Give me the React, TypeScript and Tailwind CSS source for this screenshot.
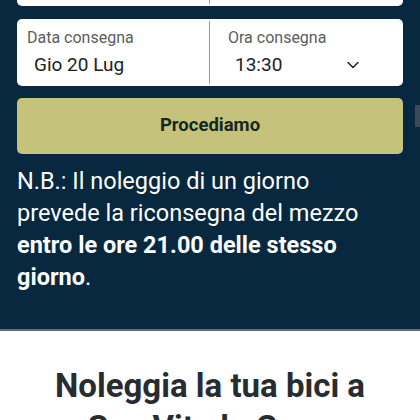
import { ChevronDown } from 'lucide-react'

function Field({ label, value, chevron, box }: { label: string; value: string; chevron?: boolean; box: string }) {
  return (
    <div className={`flex flex-col justify-center pr-[14px] ${box}`}>
      <div className="text-[16px] leading-[20px] text-[#5a5d60]">{label}</div>
      <div className="flex items-center justify-between mt-[5px] pl-[7px]">
        <span className="text-[19px] leading-[24px] text-[#202224]">{value}</span>
        {chevron && <ChevronDown className="w-[20px] h-[20px] text-[#222] mr-[26px]" strokeWidth={1.8} />}
      </div>
    </div>
  )
}

export default function App() {
  return (
    <div className="relative w-[420px] h-[420px] overflow-hidden bg-white font-['Roboto','Noto_Sans',sans-serif]">
      <div className="bg-[#07283e] px-[17px] pb-[36px] border-b-2 border-[#5f6e78]">
        {/* previous card, scrolled almost out of view */}
        <div className="flex h-[67px] mt-[-61px] bg-white rounded-[5px]">
          <div className="w-[192px]" />
          <div className="w-px bg-[#9a9a9a] my-[2px]" />
          <div className="flex-1" />
        </div>

        <div className="flex h-[67px] mt-[13px] bg-white rounded-[5px]">
          <Field label="Data consegna" value="Gio 20 Lug" box="w-[192px] pl-[10px]" />
          <div className="w-px bg-[#9a9a9a] my-[2px]" />
          <Field label="Ora consegna" value="13:30" box="flex-1 pl-[18px]" chevron />
        </div>

        <button className="w-full h-[56px] mt-[12px] rounded-[5px] bg-[#c5c27b] text-[18.5px] font-bold text-[#14291f]">
          Procediamo
        </button>

        <p className="mt-[11px] text-[23.5px] leading-[32px] text-white whitespace-nowrap">
          N.B.: Il noleggio di un giorno
          <br />
          prevede la riconsegna del mezzo
          <br />
          <strong className="font-bold">entro le ore 21.00 delle stesso</strong>
          <br />
          <strong className="font-bold">giorno</strong>.
        </p>
      </div>

      <h2 className="pt-[34px] px-[40px] text-center text-[33px] leading-[42px] font-bold text-[#282c30]">
        Noleggia la tua bici a San Vito lo Capo
      </h2>

      <div className="absolute right-0 top-[105px] w-[5px] h-[22px] bg-[#3b4a58]" />
    </div>
  )
}
